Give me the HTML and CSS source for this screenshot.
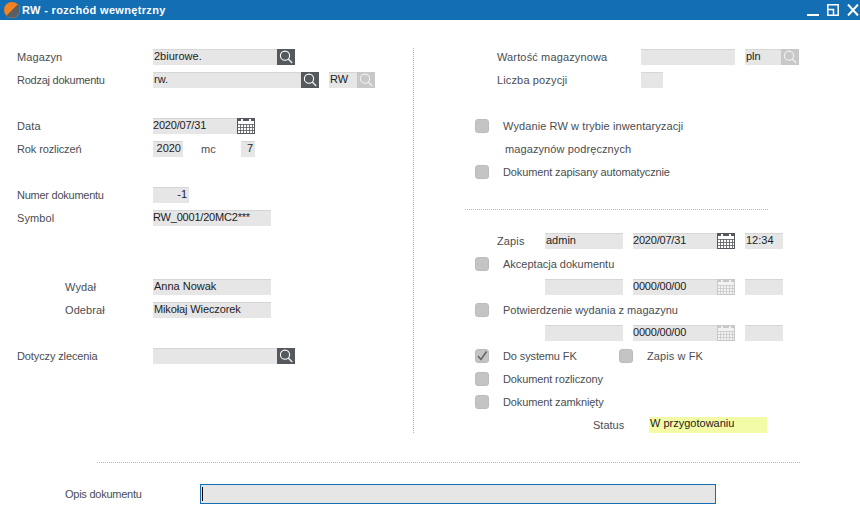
FILE: index.html
```html
<!DOCTYPE html>
<html lang="pl">
<head>
<meta charset="utf-8">
<title>RW - rozchód wewnętrzny</title>
<link rel="stylesheet" href="styles.css">
</head>
<body>
<svg class="defs" width="0" height="0" aria-hidden="true">
  <symbol id="i-search" viewBox="0 0 18 16">
    <circle cx="8" cy="6.7" r="4.6" fill="none" stroke="currentColor" stroke-width="1.1"/>
    <path d="M11.3 10L15.2 14" fill="none" stroke="currentColor" stroke-width="1.6" opacity=".85"/>
  </symbol>
  <symbol id="i-cal" viewBox="0 0 18 16">
    <path d="M1 3h16v12H1z" fill="currentColor"/>
    <path d="M4 1h2v4H4zM12 1h2v4h-2z" fill="currentColor"/>
    <path d="M1 6.5h16M1 9.5h16M1 12.5h16M3.5 6v9M6.5 6v9M9.5 6v9M12.5 6v9M15.5 6v9" stroke="var(--grid)" stroke-width=".8" fill="none"/>
  </symbol>
</svg>
<div class="window">
  <header class="titlebar">
    <svg class="logo" width="16" height="16" viewBox="0 0 16 16">
      <circle cx="8" cy="8" r="8" fill="#f58220"/>
      <path d="M13.7 2.4A8 8 0 0 1 2.4 13.7z" fill="#5a5d61"/>
    </svg>
    <span class="title">RW - rozchód wewnętrzny</span>
    <div class="winbtns">
      <svg width="12" height="12" viewBox="0 0 12 12"><path d="M0 10h12v2H0z" fill="#fff"/></svg>
      <svg width="12" height="12" viewBox="0 0 12 12"><path d="M.8.8h10.4v10.4H.8z" fill="none" stroke="#fff" stroke-width="1.5"/><path d="M1 5.5h5.5V11" fill="none" stroke="#fff" stroke-width="1.5"/></svg>
      <svg width="12" height="12" viewBox="0 0 12 12"><path d="M1 .5l10 11M11 .5l-10 11" fill="none" stroke="#fff" stroke-width="2"/></svg>
    </div>
  </header>
  <main class="columns">
    <section class="col col-left">
      <div class="row"><span class="lbl">Magazyn</span><span class="f w124">2biurowe.</span><span class="btn"><svg><use href="#i-search"/></svg></span></div>
      <div class="row"><span class="lbl tight">Rodzaj dokumentu</span><span class="f w148">rw.</span><span class="btn"><svg><use href="#i-search"/></svg></span><span class="f w28 ml10">RW</span><span class="btn off"><svg><use href="#i-search"/></svg></span></div>
      <div class="row"></div>
      <div class="row"><span class="lbl">Data</span><span class="f w84 date">2020/07/31</span><span class="btn"><svg><use href="#i-cal"/></svg></span></div>
      <div class="row"><span class="lbl snug">Rok rozliczeń</span><span class="f w30 right">2020</span><span class="mc">mc</span><span class="f w14 right">7</span></div>
      <div class="row"></div>
      <div class="row"><span class="lbl tight">Numer dokumentu</span><span class="f w36 right">-1</span></div>
      <div class="row"><span class="lbl">Symbol</span><span class="f w118 date">RW_0001/20MC2***</span></div>
      <div class="row"></div>
      <div class="row"></div>
      <div class="row"><span class="lbl ind">Wydał</span><span class="f w118">Anna Nowak</span></div>
      <div class="row"><span class="lbl ind">Odebrał</span><span class="f w118 snug">Mikołaj Wieczorek</span></div>
      <div class="row"></div>
      <div class="row"><span class="lbl snug">Dotyczy zlecenia</span><span class="f w124"></span><span class="btn"><svg><use href="#i-search"/></svg></span></div>
    </section>
    <section class="col col-right">
      <div class="row"><span class="lbl2 w144">Wartość magazynowa</span><span class="f w94"></span><span class="f w36 ml10">pln</span><span class="btn off"><svg><use href="#i-search"/></svg></span></div>
      <div class="row"><span class="lbl2 w144">Liczba pozycji</span><span class="f w22"></span></div>
      <div class="row"></div>
      <div class="row"><span class="cb"></span><span class="cbl">Wydanie RW w trybie inwentaryzacji</span></div>
      <div class="row"><span class="cbl cont">magazynów podręcznych</span></div>
      <div class="row"><span class="cb"></span><span class="cbl snug">Dokument zapisany automatycznie</span></div>
      <div class="sep"></div>
      <div class="row"><span class="lbl2 w48">Zapis</span><span class="f w78">admin</span><span class="f w84 ml10 date">2020/07/31</span><span class="btn"><svg><use href="#i-cal"/></svg></span><span class="f w38 ml10">12:34</span></div>
      <div class="row"><span class="cb"></span><span class="cbl even">Akceptacja dokumentu</span></div>
      <div class="row"><span class="gap70"></span><span class="f w78"></span><span class="f w84 ml10 date">0000/00/00</span><span class="btn off"><svg><use href="#i-cal"/></svg></span><span class="f w38 ml10"></span></div>
      <div class="row"><span class="cb"></span><span class="cbl even">Potwierdzenie wydania z magazynu</span></div>
      <div class="row"><span class="gap70"></span><span class="f w78"></span><span class="f w84 ml10 date">0000/00/00</span><span class="btn off"><svg><use href="#i-cal"/></svg></span><span class="f w38 ml10"></span></div>
      <div class="row"><span class="cb"><svg width="14" height="14" viewBox="0 0 14 14"><path d="M3 7l3 3.5L11.5 2.5" fill="none" stroke="#666" stroke-width="1.6"/></svg></span><span class="cbl w116 snug">Do systemu FK</span><span class="cb"></span><span class="cbl">Zapis w FK</span></div>
      <div class="row"><span class="cb"></span><span class="cbl snug">Dokument rozliczony</span></div>
      <div class="row"><span class="cb"></span><span class="cbl snug">Dokument zamknięty</span></div>
      <div class="row"><span class="lbl2 status">Status</span><span class="f w118 yellow">W przygotowaniu</span></div>
    </section>
  </main>
  <div class="bottom-sep"></div>
  <div class="opis"><span class="lbl3 tight">Opis dokumentu</span><span class="opis-input"><span class="caret"></span></span></div>
</div>
</body>
</html>
```
FILE: styles.css
```css
* { box-sizing: border-box; }
html, body { margin: 0; padding: 0; background: #fff; }
body { font: 11px/14px "Liberation Sans", Arial, sans-serif; color: #4a4d52; overflow: hidden; }
.defs { position: absolute; }
.window { width: 860px; height: 516px; }
.titlebar { height: 20px; background: #146eb4; display: flex; align-items: center; padding-left: 4px; color: #fff; }
.logo { margin-right: 2px; flex: none; }
.title { font-weight: bold; font-size: 11px; letter-spacing: .33px; }
.winbtns { margin-left: auto; display: flex; gap: 8px; padding-right: 1px; }
.columns { display: flex; padding-top: 28px; align-items: flex-start; }
.col { display: flex; flex-direction: column; gap: 7px; padding-top: 1px; }
.col-left { width: 414px; height: 385px; padding-left: 17px; border-right: 1px dotted #b5b5b5; }
.col-right { padding-left: 61px; flex: 1; }
.row { height: 16px; display: flex; align-items: center; white-space: nowrap; }
.lbl { width: 136px; flex: none; letter-spacing: .1px; }
.lbl.ind { padding-left: 48px; }
.lbl2 { flex: none; margin-left: 22px; letter-spacing: .14px; }
.w144 { width: 144px; }
.w48 { width: 48px; }
.status { margin-left: 118px; width: 56px; letter-spacing: 0; }
.gap70 { width: 70px; flex: none; }
.f { height: 16px; flex: none; background: #e6e6e6; border-top: 1px solid #d6d6d6; color: #1c1c24; padding-left: 1px; line-height: 12px; overflow: hidden; }
.right { text-align: right; padding: 0 2px 0 0; }
.date { padding-left: 0; letter-spacing: -.2px; }
.w124 { width: 124px; }
.w148 { width: 148px; }
.w28 { width: 28px; }
.w84 { width: 84px; }
.w30 { width: 30px; }
.w14 { width: 14px; }
.w36 { width: 36px; }
.w118 { width: 118px; }
.w94 { width: 94px; }
.w22 { width: 22px; }
.w78 { width: 78px; }
.w38 { width: 38px; }
.ml10 { margin-left: 10px; }
.mc { width: 58px; flex: none; padding-left: 18px; }
.btn { width: 18px; height: 16px; flex: none; background: #55585c; color: #fff; --grid: #55585c; display: block; }
.btn svg { display: block; width: 18px; height: 16px; }
.btn.off { background: #c8c8c8; color: #f2f2f2; --grid: #c8c8c8; }
.cb { width: 14px; height: 14px; flex: none; background: #c4c4c4; border: 1px solid #bcbcbc; border-radius: 3px; display: block; position: relative; }
.cb svg { position: absolute; left: -1px; top: -1px; display: block; }
.cbl { margin-left: 14px; letter-spacing: .1px; }
.cbl.cont { margin-left: 30px; }
.cbl.w116 { width: 116px; flex: none; }
.sep { height: 23px; width: 303px; margin: 0 0 16px -10px; border-bottom: 1px dotted #b5b5b5; }
.yellow { background: #f4fba6; border-top: 0; }
.bottom-sep { width: 703px; margin: 29px 0 0 97px; border-top: 1px dotted #b5b5b5; }
.opis { display: flex; align-items: center; margin-top: 21px; padding-left: 65px; }
.lbl3 { width: 135px; flex: none; }
.opis-input { width: 516px; height: 20px; background: #e6e6e6; border: 1px solid #146eb4; display: flex; align-items: center; padding-left: 1px; }
.caret { width: 1px; height: 14px; background: #000; }
.lbl.tight, .lbl3.tight { letter-spacing: -.25px; }
.lbl.snug, .cbl.snug, .f.snug { letter-spacing: -.12px; }
.cbl.even { letter-spacing: 0; }
```
